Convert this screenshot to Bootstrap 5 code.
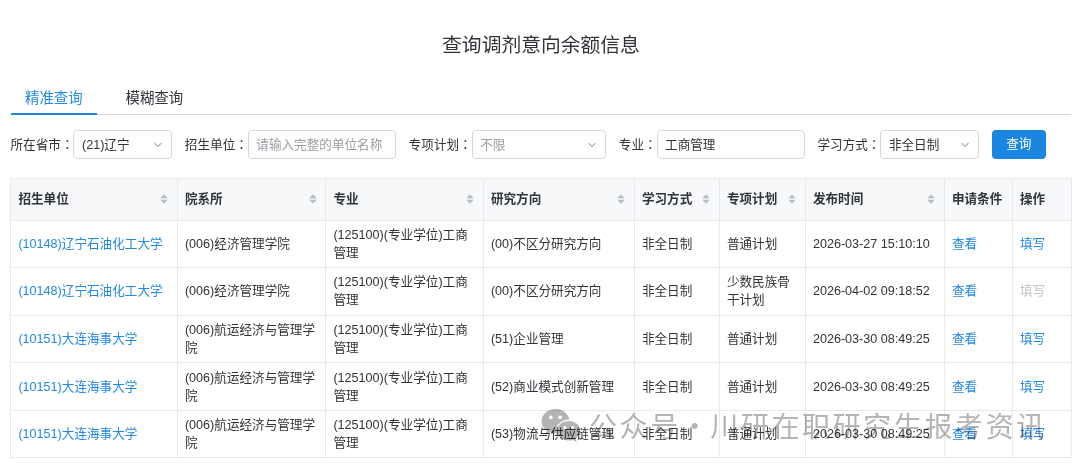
<!DOCTYPE html>
<html lang="zh-CN">
<head>
<meta charset="utf-8">
<meta name="viewport" content="width=device-width, initial-scale=1">
<title>查询调剂意向余额信息</title>
<link rel="stylesheet" href="https://cdn.jsdelivr.net/npm/bootstrap@5.3.0/dist/css/bootstrap.min.css">
<style>
  body { font: 12.6px/18px "Liberation Sans", "Noto Sans CJK SC", sans-serif; color: #303338; background: #fff; overflow: hidden; }
  a { color: #2389e3; text-decoration: none; }
  .page-area { padding: 30px 9px 0 11px; }
  .page-title { font-size: 19.8px; line-height: 30px; font-weight: 400; margin: 0 0 20px; }
  .query-tabs { border-bottom: 1px solid #d8d9dc; height: 35px; gap: 15px; }
  .query-tabs .nav-link { font-size: 14.4px; line-height: 20px; padding: 8px 14px 0; height: 35px; color: #303338; border-bottom: 2px solid transparent; }
  .query-tabs .nav-link.active { color: #2389e3; border-color: #1a86e0; }
  .query-form { margin: 15px 0 19px -.5px; gap: 12.6px; }
  .query-form label { white-space: nowrap; color: #303338; }
  .colon { font-family: "Noto Sans CJK TC", sans-serif; line-height: 1; }
  .field { height: 29px; border: 1px solid #d6d8dd; border-radius: 4px; padding: 0 7.5px; color: #303338; background: #fff; }
  .field.empty { color: #9a9da3; }
  .w-sm { width: 98.8px; } .w-md { width: 134.5px; } .w-lg { width: 148.3px; }
  .field svg { margin-right: 1px; }
  .btn-query { height: 29px; width: 54px; padding: 0; font-size: 12.6px; line-height: 29px; border-radius: 4px; color: #fff; background: #1a86e0; border: 0; }
  .result-table { width: 1061px; table-layout: fixed; margin: 0 0 0 -.6px; color: inherit; border-color: #e8eaee; }
  .result-table > :not(caption) > * > * { padding: 0 7px; vertical-align: middle; background: transparent; color: inherit; box-shadow: none; border-width: 1px; border-color: #e8eaee; }
  .result-table thead th { height: 41.5px; background: #f6f8fa; font-weight: 700; white-space: nowrap; }
  .result-table tbody td { height: 47.6px; }
  .result-table tbody a { color: #2389e3; }
  .result-table .off { color: #c3c6cb; }
  .sorter { flex: none; margin-right: 1.5px; margin-top: -1px; }
  .overlay-mark { left: 541px; top: 406px; z-index: 2; color: #b4b4b4; mix-blend-mode: multiply; pointer-events: none; white-space: nowrap; }
  .mark-text { font: 400 28px/38px "Noto Sans CJK SC", sans-serif; letter-spacing: 2.6px; }
</style>
</head>
<body>
<svg class="d-none" aria-hidden="true">
  <symbol id="sort" viewBox="0 0 8 10"><path d="M4 .2 7.700 4.200H.3ZM4 9.800 .3 5.800h7.400Z" fill="#b8bcc4"/></symbol>
  <symbol id="down" viewBox="0 0 10 6"><path d="M1.500 1 5 4.500 8.500 1" fill="none" stroke="#aeb2b9" stroke-width="1.2"/></symbol>
</svg>
<main class="page-area">
  <h1 class="page-title text-center">查询调剂意向余额信息</h1>
  <ul class="nav query-tabs">
    <li class="nav-item"><a class="nav-link active" href="#">精准查询</a></li>
    <li class="nav-item"><a class="nav-link" href="#">模糊查询</a></li>
  </ul>
  <form class="query-form d-flex align-items-center">
    <div class="d-flex align-items-center"><label>所在省市<span class="colon" lang="zh-TW">：</span></label><div class="field w-sm d-flex align-items-center justify-content-between"><span>(21)辽宁</span><svg width="10" height="6"><use href="#down"/></svg></div></div>
    <div class="d-flex align-items-center"><label>招生单位<span class="colon" lang="zh-TW">：</span></label><div class="field empty w-lg d-flex align-items-center"><span class="text-nowrap">请输入完整的单位名称</span></div></div>
    <div class="d-flex align-items-center"><label>专项计划<span class="colon" lang="zh-TW">：</span></label><div class="field empty w-md d-flex align-items-center justify-content-between"><span>不限</span><svg width="10" height="6"><use href="#down"/></svg></div></div>
    <div class="d-flex align-items-center"><label>专业<span class="colon" lang="zh-TW">：</span></label><div class="field w-lg d-flex align-items-center"><span>工商管理</span></div></div>
    <div class="d-flex align-items-center"><label>学习方式<span class="colon" lang="zh-TW">：</span></label><div class="field w-sm d-flex align-items-center justify-content-between"><span>非全日制</span><svg width="10" height="6"><use href="#down"/></svg></div></div>
    <button type="button" class="btn btn-query">查询</button>
  </form>
  <table class="table table-bordered result-table">
    <colgroup><col style="width:166.5px"><col style="width:148.5px"><col style="width:157.5px"><col style="width:151px"><col style="width:85px"><col style="width:86px"><col style="width:139px"><col style="width:68px"><col style="width:59.5px"></colgroup>
    <thead>
      <tr>
        <th><div class="d-flex align-items-center justify-content-between">招生单位<svg class="sorter" width="8" height="10"><use href="#sort"/></svg></div></th>
        <th><div class="d-flex align-items-center justify-content-between">院系所<svg class="sorter" width="8" height="10"><use href="#sort"/></svg></div></th>
        <th><div class="d-flex align-items-center justify-content-between">专业<svg class="sorter" width="8" height="10"><use href="#sort"/></svg></div></th>
        <th><div class="d-flex align-items-center justify-content-between">研究方向<svg class="sorter" width="8" height="10"><use href="#sort"/></svg></div></th>
        <th><div class="d-flex align-items-center justify-content-between">学习方式<svg class="sorter" width="8" height="10"><use href="#sort"/></svg></div></th>
        <th><div class="d-flex align-items-center justify-content-between">专项计划<svg class="sorter" width="8" height="10"><use href="#sort"/></svg></div></th>
        <th><div class="d-flex align-items-center justify-content-between">发布时间<svg class="sorter" width="8" height="10"><use href="#sort"/></svg></div></th>
        <th>申请条件</th>
        <th>操作</th>
      </tr>
    </thead>
    <tbody>
      <tr><td><a href="#">(10148)辽宁石油化工大学</a></td><td>(006)经济管理学院</td><td>(125100)(专业学位)工商管理</td><td>(00)不区分研究方向</td><td>非全日制</td><td>普通计划</td><td>2026-03-27 15:10:10</td><td><a href="#">查看</a></td><td><a href="#">填写</a></td></tr>
      <tr><td><a href="#">(10148)辽宁石油化工大学</a></td><td>(006)经济管理学院</td><td>(125100)(专业学位)工商管理</td><td>(00)不区分研究方向</td><td>非全日制</td><td>少数民族骨干计划</td><td>2026-04-02 09:18:52</td><td><a href="#">查看</a></td><td><span class="off">填写</span></td></tr>
      <tr><td><a href="#">(10151)大连海事大学</a></td><td>(006)航运经济与管理学院</td><td>(125100)(专业学位)工商管理</td><td>(51)企业管理</td><td>非全日制</td><td>普通计划</td><td>2026-03-30 08:49:25</td><td><a href="#">查看</a></td><td><a href="#">填写</a></td></tr>
      <tr><td><a href="#">(10151)大连海事大学</a></td><td>(006)航运经济与管理学院</td><td>(125100)(专业学位)工商管理</td><td>(52)商业模式创新管理</td><td>非全日制</td><td>普通计划</td><td>2026-03-30 08:49:25</td><td><a href="#">查看</a></td><td><a href="#">填写</a></td></tr>
      <tr><td><a href="#">(10151)大连海事大学</a></td><td>(006)航运经济与管理学院</td><td>(125100)(专业学位)工商管理</td><td>(53)物流与供应链管理</td><td>非全日制</td><td>普通计划</td><td>2026-03-30 08:49:25</td><td><a href="#">查看</a></td><td><a href="#">填写</a></td></tr>
    </tbody>
  </table>
</main>
<div class="overlay-mark position-absolute d-flex align-items-center">
  <svg width="40" height="34" viewBox="0 0 40 34" fill="currentColor">
    <path fill-rule="evenodd" d="M14.500 1C6.800 1 .5 6.500 .5 13.200c0 3.700 2 7.200 5.200 9.400L4.300 27l5-2.500c1.700.5 3.400.7 5.300.7h.9c-2-7.300 4.600-13.900 12.800-13.700C27.200 5.500 21.500 1 14.500 1ZM9.800 7.400a1.900 1.900 0 1 1 0 3.800 1.900 1.900 0 0 1 0-3.800Zm9.400 0a1.900 1.900 0 1 1 0 3.800 1.900 1.900 0 0 1 0-3.800Z"/>
    <path fill-rule="evenodd" d="M27.700 13c-6.400 0-11.600 4.400-11.600 9.800s5.200 9.800 11.600 9.800c1.400 0 2.800-.2 4.100-.6l3.900 2-1.100-3.300c2.800-1.800 4.700-4.600 4.700-7.900 0-5.400-5.200-9.800-11.600-9.800Zm-3.800 5a1.500 1.500 0 1 1 0 3 1.500 1.500 0 0 1 0-3Zm7.600 0a1.500 1.500 0 1 1 0 3 1.500 1.500 0 0 1 0-3Z"/>
  </svg>
  <span class="mark-text" style="margin-left:8px">公众号</span>
  <span class="mark-text text-center" style="width:29.500px">·</span>
  <span class="mark-text">川研在职研究生报考资讯</span>
</div>
<script src="https://cdn.jsdelivr.net/npm/bootstrap@5.3.0/dist/js/bootstrap.bundle.min.js"></script>
</body>
</html>
